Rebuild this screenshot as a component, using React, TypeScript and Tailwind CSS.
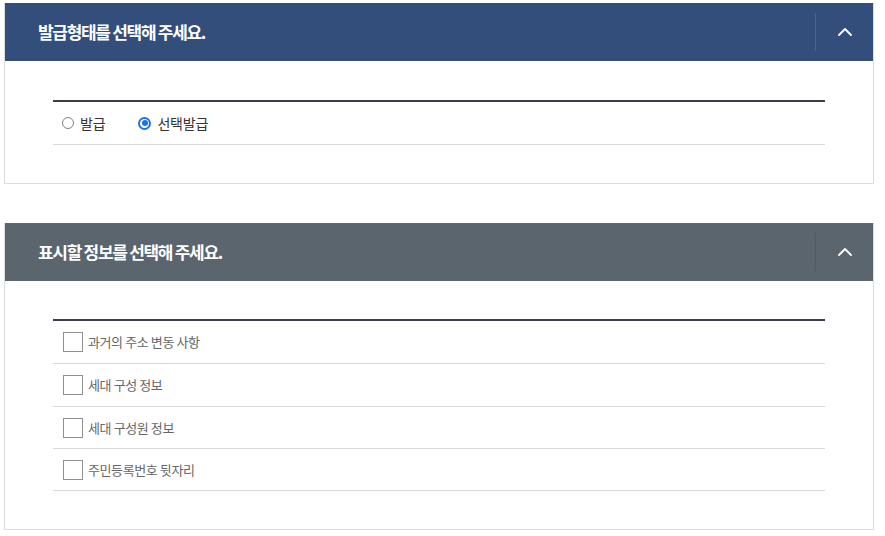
import React from "react";

const font = { fontFamily: '"Noto Sans CJK KR", "Noto Sans", sans-serif' };

function Chevron() {
  return (
    <svg width="16" height="10" viewBox="0 0 16 10" fill="none">
      <polyline points="2,8 8,2 14,8" stroke="#ffffff" strokeWidth="1.8" strokeLinecap="round" strokeLinejoin="round" />
    </svg>
  );
}

function Header({ title, bg, divider }: { title: string; bg: string; divider: string }) {
  return (
    <div className={`flex items-stretch h-[58px] ${bg}`}>
      <div className="flex-1 flex items-center pl-[33px] text-white font-bold text-[17px] tracking-[-1.3px]">
        {title}
      </div>
      <div className="flex items-center py-[10px]">
        <div className={`w-px h-full ${divider}`} />
      </div>
      <div className="w-[57px] flex items-center justify-center">
        <Chevron />
      </div>
    </div>
  );
}

function Radio({ checked, label }: { checked: boolean; label: string }) {
  return (
    <div className="flex items-center gap-[6px]">
      {checked ? (
        <div className="w-[13px] h-[13px] rounded-full bg-[#1a73e8] flex items-center justify-center">
          <div className="w-[9px] h-[9px] rounded-full bg-white flex items-center justify-center">
            <div className="w-[6px] h-[6px] rounded-full bg-[#1a73e8]" />
          </div>
        </div>
      ) : (
        <div className="w-[12px] h-[12px] rounded-full border border-[#808080] bg-white" />
      )}
      <span className="text-[14px] text-[#333] tracking-[-0.2px]">{label}</span>
    </div>
  );
}

function CheckRow({ label, tall }: { label: string; tall?: boolean }) {
  return (
    <div className={`flex items-center ${tall ? "h-[43px]" : "h-[42px]"} border-b border-[#d9d9d9] pl-[10px] gap-[5px]`}>
      <div className="w-[20px] h-[20px] border border-[#8f8f8f] bg-white" />
      <span className="text-[13px] text-[#666] tracking-[-0.4px]">{label}</span>
    </div>
  );
}

export default function App() {
  return (
    <div className="bg-white w-[885px] h-[536px] pt-[3px] pl-[4px]" style={font}>
      <div className="w-[870px] border border-[#dcdcdc] border-t-0">
        <Header title="발급형태를 선택해 주세요." bg="bg-[#344e7c]" divider="bg-[#4a6392]" />
        <div className="px-[48px] pt-[39px] pb-[38px]">
          <div className="border-t-2 border-[#3b3f4b]">
            <div className="flex items-center h-[43px] border-b border-[#d9d9d9] pl-[9px] gap-[33px]">
              <Radio checked={false} label="발급" />
              <Radio checked={true} label="선택발급" />
            </div>
          </div>
        </div>
      </div>

      <div className="w-[870px] border border-[#dcdcdc] border-t-0 mt-[39px]">
        <Header title="표시할 정보를 선택해 주세요." bg="bg-[#5a656e]" divider="bg-[#4b5a74]" />
        <div className="px-[48px] pt-[38px] pb-[38px]">
          <div className="border-t-2 border-[#3b3f4b]">
            <CheckRow label="과거의 주소 변동 사항" tall />
            <CheckRow label="세대 구성 정보" tall />
            <CheckRow label="세대 구성원 정보" />
            <CheckRow label="주민등록번호 뒷자리" />
          </div>
        </div>
      </div>
    </div>
  );
}
